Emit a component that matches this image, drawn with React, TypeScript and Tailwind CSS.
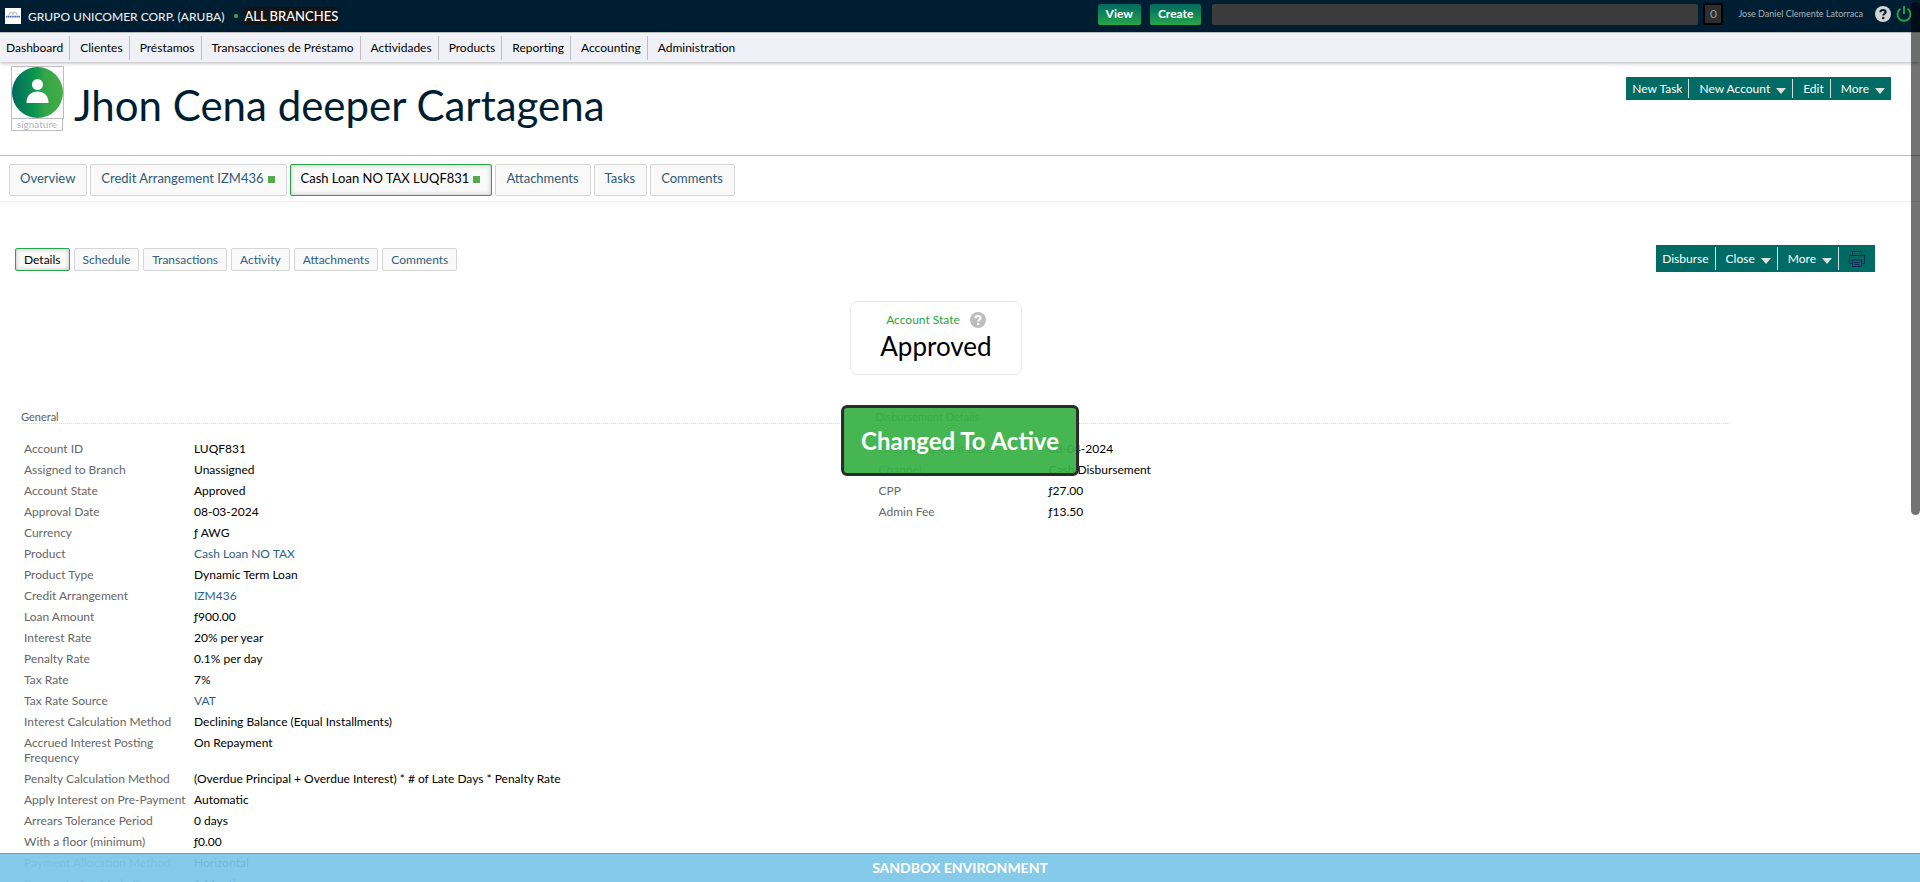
import type { ReactNode } from "react";

type Row = { label: string; value: string; link?: boolean };

const navItems = [
  "Dashboard",
  "Clientes",
  "Préstamos",
  "Transacciones de Préstamo",
  "Actividades",
  "Products",
  "Reporting",
  "Accounting",
  "Administration",
];

const clientTabs = [
  { label: "Overview" },
  { label: "Credit Arrangement IZM436", dot: true },
  { label: "Cash Loan NO TAX LUQF831", dot: true, active: true },
  { label: "Attachments" },
  { label: "Tasks" },
  { label: "Comments" },
];

const accountTabs = ["Details", "Schedule", "Transactions", "Activity", "Attachments", "Comments"];

const generalRows: Row[] = [
  { label: "Account ID", value: "LUQF831" },
  { label: "Assigned to Branch", value: "Unassigned" },
  { label: "Account State", value: "Approved" },
  { label: "Approval Date", value: "08-03-2024" },
  { label: "Currency", value: "ƒ AWG" },
  { label: "Product", value: "Cash Loan NO TAX", link: true },
  { label: "Product Type", value: "Dynamic Term Loan" },
  { label: "Credit Arrangement", value: "IZM436", link: true },
  { label: "Loan Amount", value: "ƒ900.00" },
  { label: "Interest Rate", value: "20% per year" },
  { label: "Penalty Rate", value: "0.1% per day" },
  { label: "Tax Rate", value: "7%" },
  { label: "Tax Rate Source", value: "VAT", link: true },
  { label: "Interest Calculation Method", value: "Declining Balance (Equal Installments)" },
  { label: "Accrued Interest Posting Frequency", value: "On Repayment" },
  {
    label: "Penalty Calculation Method",
    value: "(Overdue Principal + Overdue Interest) * # of Late Days * Penalty Rate",
  },
  { label: "Apply Interest on Pre-Payment", value: "Automatic" },
  { label: "Arrears Tolerance Period", value: "0 days" },
  { label: "With a floor (minimum)", value: "ƒ0.00" },
  { label: "Payment Allocation Method", value: "Horizontal" },
  { label: "Payments Are Made Every", value: "1 Month" },
];

const disbursementRows: Row[] = [
  { label: "First Repayment Date", value: "08-04-2024" },
  { label: "Channel", value: "Cash Disbursement" },
  { label: "CPP", value: "ƒ27.00" },
  { label: "Admin Fee", value: "ƒ13.50" },
];

function Caret() {
  return (
    <svg viewBox="0 0 10 6" className="mt-1 h-[6px] w-[10px] shrink-0 fill-[#e0e0e0]" aria-hidden="true">
      <path d="M0 0h10L5 6z" />
    </svg>
  );
}

function HelpIcon({ className }: { className: string }) {
  return (
    <svg viewBox="0 0 16 16" className={className} aria-hidden="true">
      <circle cx="8" cy="8" r="8" fill="currentColor" />
      <path d="M5.4 6.3C5.4 4.8 6.5 4 8 4s2.6.8 2.6 2.1c0 1.6-2.3 1.7-2.3 3.4" fill="none" stroke="var(--mark)" strokeWidth="2.1" />
      <circle cx="8.2" cy="12" r="1.25" fill="var(--mark)" />
    </svg>
  );
}

function PrinterIcon() {
  return (
    <svg viewBox="0 0 16 16" className="size-4" fill="none" stroke="#1b2a55" strokeWidth="1" aria-hidden="true">
      <path d="M3.5 4.5v-4h9v4M3.5 12.5h-3v-8h15v8h-3M3.5 9v6.5h9V9M2.5 9h11M5.5 11.5h5M5.5 13.5h5M12.5 6.5h1" />
    </svg>
  );
}

function DetailTable({ title, rows }: { title: string; rows: Row[] }) {
  return (
    <section className="flex-1">
      <h2 className="border-b border-dotted border-[#dcdcdc] text-[11px] leading-3 text-[#5c5c5c]">{title}</h2>
      <table className="mt-[14px] ml-[3px] text-xs leading-[15px]">
        <tbody>
          {rows.map((row) => (
            <tr key={row.label} className="align-top">
              <th scope="row" className="w-[170px] py-[3px] text-left font-normal text-[#666]">
                {row.label}
              </th>
              <td className="py-[3px] text-black">
                {row.link ? (
                  <a href="#" className="text-[#2b6288]">
                    {row.value}
                  </a>
                ) : (
                  row.value
                )}
              </td>
            </tr>
          ))}
        </tbody>
      </table>
    </section>
  );
}

function ActionButton({ children }: { children: ReactNode }) {
  return (
    <button
      type="button"
      className="flex items-center gap-1.5 border-r border-[#d5dede] pr-1.5 pl-[10px] first:pl-1.5 last:border-0"
    >
      {children}
    </button>
  );
}

export default function App() {
  return (
    <div className="relative h-screen overflow-hidden bg-white font-['Lato',sans-serif] text-[13px] text-black">
      <header className="flex h-8 items-center bg-[#001e32] pr-2 pl-[5px] text-white">
        <svg viewBox="0 0 16 16" className="size-4" aria-hidden="true">
          <rect width="16" height="16" fill="#fff" />
          <path d="M4 7c1-3 3-3 4-1 1-3 4-2 4 1" fill="none" stroke="#b9c0cc" strokeWidth="1.2" />
          <path d="M1 8.6h14" stroke="#4c62ac" strokeWidth="1.8" strokeDasharray="1.4 .4" />
        </svg>
        <span className="ml-[7px] pt-px text-xs font-medium text-[#e6eaed]">GRUPO UNICOMER CORP. (ARUBA)</span>
        <span className="ml-[10px] size-1 rounded-full bg-[#37b34a]" />
        <span className="ml-1.5 bg-[#141414] text-[13px] leading-[18px] font-medium">ALL BRANCHES</span>
        <div className="mb-1 ml-auto flex items-center">
          <button type="button" className="h-[21px] rounded-xs bg-linear-to-b from-[#00695f] to-[#27a548] px-2 text-xs font-bold">
            View
          </button>
          <button type="button" className="ml-[9px] h-[21px] rounded-xs bg-linear-to-b from-[#00695f] to-[#27a548] px-2 text-xs font-bold">
            Create
          </button>
          <input
            type="search"
            aria-label="Search"
            className="ml-[11px] h-[21px] w-[486px] rounded-xs bg-[#3b3b3b] px-2 outline-none"
          />
          <button
            type="button"
            className="ml-[5px] h-[22px] w-5 rounded-xs border-2 border-black bg-[#2e2e2e] text-xs text-[#9a9a9a]"
          >
            0
          </button>
          <a href="#" className="ml-[15px] text-[9px] text-[#aab3ba]">
            Jose Daniel Clemente Latorraca
          </a>
          <button type="button" aria-label="Help" className="ml-3">
            <HelpIcon className="size-4 text-[#d4d4d4] [--mark:#001e32]" />
          </button>
          <button type="button" aria-label="Log out" className="ml-[5px]">
            <svg viewBox="0 0 16 16" className="size-4" fill="none" stroke="#26a548" strokeWidth="1.9" aria-hidden="true">
              <path d="M8 0v8M4.500 2.800a6.500 6.500 0 1 0 7 0" />
            </svg>
          </button>
        </div>
      </header>

      <nav className="relative flex h-[30px] items-center border-t border-[#bcbcbc] bg-[#f0f1f6] shadow-[0_1px_4px_rgba(0,0,0,0.3)]">
        {navItems.map((item) => (
          <a
            key={item}
            href="#"
            className="flex h-6 items-center border-r border-[#bdbdbd] pr-1.5 pl-[10px] text-xs first:pl-1.5 last:border-0"
          >
            {item}
          </a>
        ))}
      </nav>

      <section className="flex h-[94px] border-b border-[#bdbdbd] pr-[29px] pl-[11px]">
        <div className="mt-1 w-[53px]">
          <div className="border border-[#bdbdbd]">
            <svg viewBox="0 0 51 51" className="block w-full" aria-hidden="true">
              <defs>
                <linearGradient id="avatar">
                  <stop offset="0" stopColor="#00695f" />
                  <stop offset="0.45" stopColor="#0b984e" />
                  <stop offset="0.65" stopColor="#34a548" />
                  <stop offset="1" stopColor="#46ac46" />
                </linearGradient>
              </defs>
              <circle cx="25.500" cy="25.500" r="25.500" fill="url(#avatar)" />
              <circle cx="25.500" cy="17.500" r="5.500" fill="#fff" />
              <path d="M14.500 36c0-7.500 4.500-11.500 11-11.500s11 4 11 11.500z" fill="#fff" />
            </svg>
          </div>
          <div className="-mt-px mr-px border border-[#bdbdbd] text-center text-[10px] leading-[11px] text-[#b5b5b5]">signature</div>
        </div>
        <h1 className="mt-[17px] ml-[10px] text-[42px] leading-[52px] text-[#001e32]">Jhon Cena deeper Cartagena</h1>
        <div className="mt-[15px] ml-auto flex h-[23px] bg-[#006b64] py-0.5 text-xs text-white">
          <ActionButton>New Task</ActionButton>
          <ActionButton>
            New Account <Caret />
          </ActionButton>
          <ActionButton>Edit</ActionButton>
          <ActionButton>
            More <Caret />
          </ActionButton>
        </div>
      </section>

      <div className="flex gap-[3px] border-b border-[#eeeee6] px-[9px] pt-2 pb-[5px]">
        {clientTabs.map((tab) => (
          <button
            key={tab.label}
            type="button"
            className={
              tab.active
                ? "flex h-8 items-center gap-1 rounded-xs border border-[#27a548] bg-[#f9f9f9] pr-[11px] pb-[3px] pl-[10px] text-[13px] text-black shadow-[inset_0_0_4px_rgba(0,0,0,0.25)]"
                : "flex h-8 items-center gap-1 rounded-xs border border-[#d5d5d5] bg-[#f9f9f9] pr-[11px] pb-[3px] pl-[10px] text-[13px] text-[#2f5b74]"
            }
          >
            {tab.label}
            {tab.dot && <span className="mt-0.5 size-[7px] bg-[#55a94e]" />}
          </button>
        ))}
      </div>

      <div className="mt-[43px] flex items-center justify-between pr-[45px] pl-[15px]">
        <div className="flex gap-1 pt-0.5">
          {accountTabs.map((tab, index) => (
            <button
              key={tab}
              type="button"
              className={
                index === 0
                  ? "h-[23px] rounded-xs border border-[#27a548] bg-[#f9f9f9] px-2 text-xs text-black shadow-[inset_0_0_4px_rgba(0,0,0,0.25)]"
                  : "h-[23px] rounded-xs border border-[#d5d5d5] bg-[#f9f9f9] px-2 text-xs text-[#2f6183]"
              }
            >
              {tab}
            </button>
          ))}
        </div>
        <div className="flex h-[27px] bg-[#006b64] py-0.5 text-xs text-white">
          <ActionButton>Disburse</ActionButton>
          <ActionButton>
            Close <Caret />
          </ActionButton>
          <ActionButton>
            More <Caret />
          </ActionButton>
          <button type="button" aria-label="Print" className="px-[10px]">
            <PrinterIcon />
          </button>
        </div>
      </div>

      <div className="mt-[29px] flex justify-center pr-12">
        <div className="flex h-[74px] w-[172px] flex-col items-center rounded-lg border border-[#e8e8e8] pt-[10px]">
          <div className="flex items-center gap-[10px] text-xs leading-4 text-[#27a53c]">
            Account State
            <HelpIcon className="size-4 text-[#bdbdbd] [--mark:#fff]" />
          </div>
          <p className="text-[26px] leading-9">Approved</p>
        </div>
      </div>

      <main className="mt-[36px] flex pr-[190px] pl-[21px]">
        <DetailTable title="General" rows={generalRows} />
        <DetailTable title="Disbursement Details" rows={disbursementRows} />
      </main>

      <div
        role="status"
        className="absolute top-[405px] left-1/2 flex h-[71px] -translate-x-1/2 items-center rounded-md border-3 border-[#2b2b2b] bg-[#37b045]/93 px-[17px] text-2xl font-bold whitespace-nowrap text-white"
      >
        Changed To Active
      </div>

      <footer className="absolute inset-x-0 bottom-0 flex h-[29px] items-center justify-center border-t border-[#8f8f8f] bg-[#7dc6e8]/93 text-sm font-bold text-white">
        SANDBOX ENVIRONMENT
      </footer>

      <div className="absolute top-0.5 right-0 h-[513px] w-[9px] rounded-full bg-black/55" />
    </div>
  );
}
